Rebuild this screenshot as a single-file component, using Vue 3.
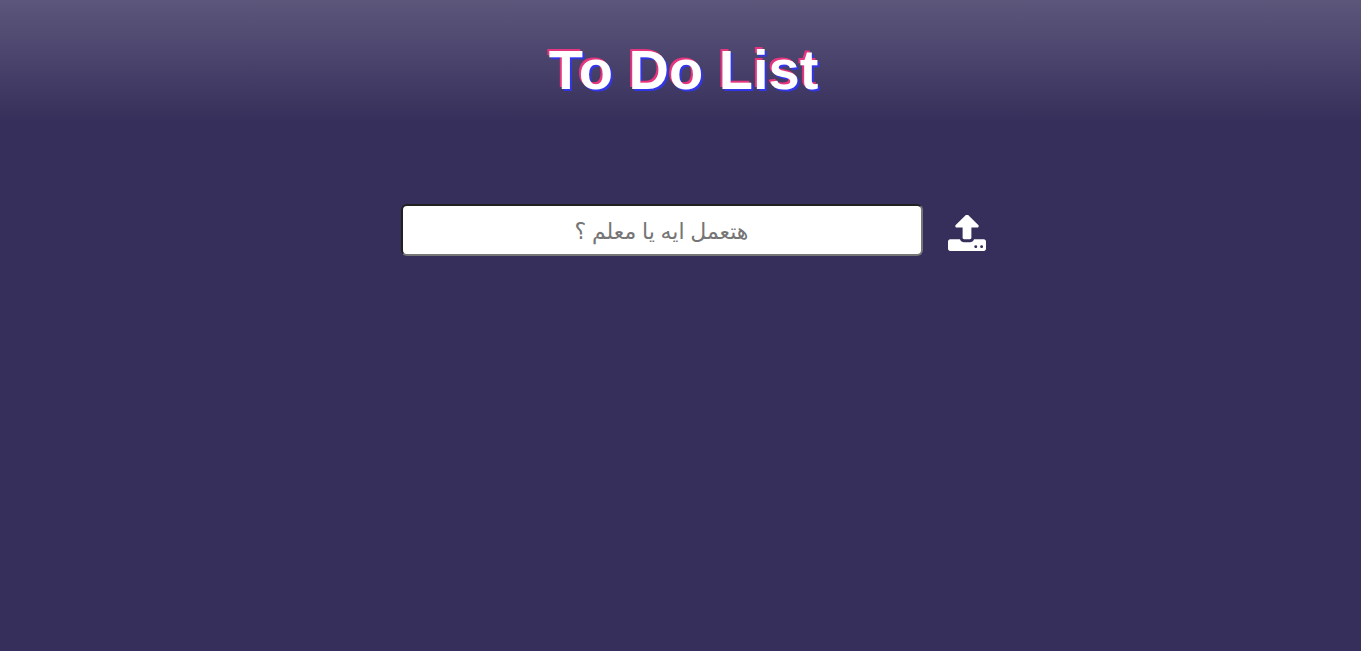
<script setup>
import { ref } from 'vue'

const task = ref('')
const tasks = ref([])

function addTask() {
  const text = task.value.trim()
  if (!text) return
  tasks.value.push(text)
  task.value = ''
}
</script>

<template>
  <header class="header">
    <h1 class="title">To Do List</h1>
  </header>
  <main>
    <form class="entry" @submit.prevent="addTask">
      <input
        v-model="task"
        class="field"
        type="text"
        dir="rtl"
        lang="ar"
        placeholder="هتعمل ايه يا معلم ؟"
        aria-label="هتعمل ايه يا معلم ؟"
      />
      <button class="submit" type="submit" aria-label="Add task">
        <svg class="icon" viewBox="64 88 1664 1576" aria-hidden="true">
          <path
            fill="currentColor"
            d="M1344 1472q0-26-19-45t-45-19-45 19-19 45 19 45 45 19 45-19 19-45zm256 0q0-26-19-45t-45-19-45 19-19 45 19 45 45 19 45-19 19-45zm128-224v320q0 40-28 68t-68 28h-1472q-40 0-68-28t-28-68v-320q0-40 28-68t68-28h427q21 56 70.500 92t110.500 36h256q61 0 110.500-36t70.500-92h427q40 0 68 28t28 68zm-325-648q-17 40-59 40h-256v448q0 26-19 45t-45 19h-256q-26 0-45-19t-19-45v-448h-256q-42 0-59-40-17-39 14-69l448-448q18-19 45-19t45 19l448 448q31 30 14 69z"
          />
        </svg>
      </button>
    </form>
    <ul v-if="tasks.length" class="tasks">
      <li v-for="(item, index) in tasks" :key="index">{{ item }}</li>
    </ul>
  </main>
</template>

<style>
body {
  margin: 0;
  background: #362f5b;
}
</style>

<style scoped>
.header {
  padding: 38px 0 20px 6px;
  background: linear-gradient(to bottom, #5d567b, #362f5b);
  text-align: center;
}

.title {
  margin: 0;
  color: #fff;
  font: bold 56px/64px "Liberation Sans", Arial, sans-serif;
  text-shadow: -2px -2px 0 #e6357f, 2px 2px 0 #3236e8;
}

.entry {
  display: flex;
  justify-content: center;
  align-items: center;
  margin-top: 82px;
}

.field {
  box-sizing: border-box;
  flex: 0 1 522px;
  min-width: 0;
  height: 52px;
  margin: 0 25px;
  padding: 0 8px;
  border: 2px inset #767676;
  border-radius: 6px;
  background: #fff;
  color: #222;
  font: 22px "Noto Sans", "Open Sans", "DejaVu Sans", sans-serif;
  text-align: center;
}

.field::placeholder {
  color: #757575;
  opacity: 1;
}

.submit {
  padding: 6px 0 0;
  border: 0;
  background: none;
  color: #fff;
  cursor: pointer;
}

.icon {
  display: block;
  width: 38px;
  height: 36px;
}

.tasks {
  color: #fff;
  font: 22px "Noto Sans", sans-serif;
  text-align: center;
  list-style: none;
}
</style>
